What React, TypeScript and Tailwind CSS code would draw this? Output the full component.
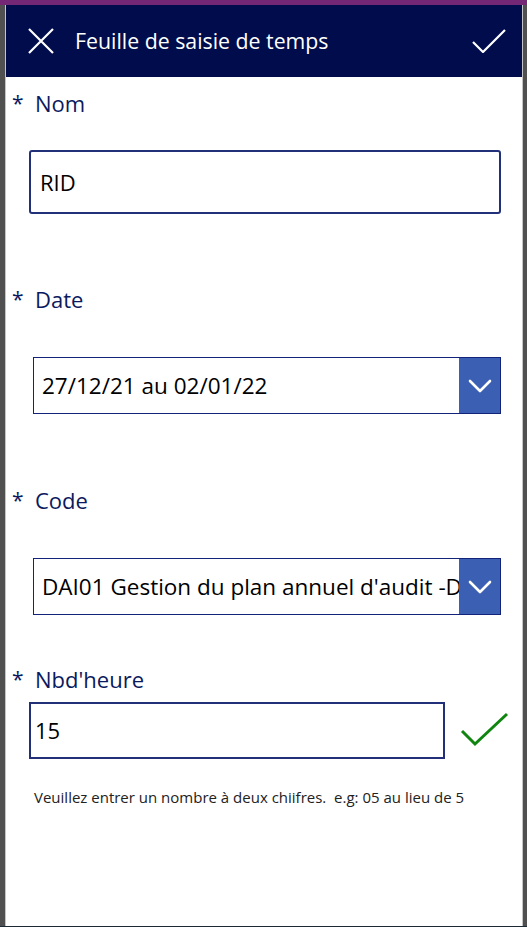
import React from "react";

const font = { fontFamily: '"Open Sans", "Noto Sans", sans-serif' };

function Label({ text, className }: { text: string; className: string }) {
  return (
    <div className={`flex h-[28px] items-center text-[#0b1a5e] ${className}`}>
      <span className="w-[29px] pl-[6px] text-[21px] leading-none">*</span>
      <span className="text-[22px] leading-none">{text}</span>
    </div>
  );
}

function Chevron() {
  return (
    <svg width="24" height="14" viewBox="0 0 24 14" fill="none">
      <path d="M2 2 L12 12 L22 2" stroke="white" strokeWidth="2.6" strokeLinecap="round" strokeLinejoin="round" />
    </svg>
  );
}

function Dropdown({ text, className }: { text: string; className: string }) {
  return (
    <div className={`ml-[27px] flex h-[57px] w-[468px] border border-[#14237a] bg-white ${className}`}>
      <div className="flex min-w-0 flex-1 items-center overflow-hidden whitespace-nowrap pl-[8px] text-[22.5px] text-black">
        {text}
      </div>
      <div className="flex w-[41px] items-center justify-center bg-[#3a5fb3]">
        <Chevron />
      </div>
    </div>
  );
}

export default function App() {
  return (
    <div className="flex h-[927px] w-[527px] flex-col bg-white" style={font}>
      <div className="h-[5px] w-full bg-[#742774]" />
      <div className="flex min-h-0 flex-1">
        <div className="w-[5px] bg-[#505050]" />
        <div className="w-[1px] bg-[#c4c4c4]" />
        <div className="flex flex-1 flex-col">
          <div className="flex h-[72px] items-center bg-[#000c4b] text-white">
            <svg className="ml-[22px]" width="26" height="26" viewBox="0 0 26 26" fill="none">
              <path d="M1 1 L25 25 M25 1 L1 25" stroke="white" strokeWidth="2.2" />
            </svg>
            <span className="ml-[21px] text-[21.3px] leading-none">Feuille de saisie de temps</span>
            <svg className="ml-auto mr-[16px]" width="34" height="24" viewBox="0 0 34 24" fill="none">
              <path d="M1 13 L11 23 L33 1" stroke="white" strokeWidth="2.2" />
            </svg>
          </div>

          <Label text="Nom" className="mt-[12px]" />
          <div className="ml-[23px] mt-[33px] flex h-[64px] w-[472px] items-center rounded-[3px] border-2 border-[#22307a] pl-[9px] text-[22px] text-black">
            RID
          </div>

          <Label text="Date" className="mt-[71px]" />
          <Dropdown text="27/12/21 au 02/01/22" className="mt-[44px]" />

          <Label text="Code" className="mt-[72px]" />
          <Dropdown text="DAI01 Gestion du plan annuel d'audit -DAI01" className="mt-[44px]" />

          <Label text="Nbd'heure" className="mt-[50px]" />
          <div className="mt-[9px] flex items-center">
            <div className="ml-[23px] flex h-[57px] w-[416px] items-center border-2 border-[#22307a] pl-[4px] text-[22px] text-black">
              15
            </div>
            <svg className="ml-[15px]" width="50" height="38" viewBox="0 0 50 38" fill="none">
              <path d="M2 19 L15 32 L47 2" stroke="#0f850f" strokeWidth="3" />
            </svg>
          </div>

          <div className="ml-[28px] mt-[28px] h-[20px] whitespace-nowrap text-[15px] leading-[20px] text-[#222]">
            Veuillez entrer un nombre à deux chiifres.&nbsp; e.g: 05 au lieu de 5
          </div>
        </div>
        <div className="w-[1px] bg-[#c4c4c4]" />
        <div className="w-[4px] bg-[#505050]" />
      </div>
      <div className="h-[1px] w-full bg-[#1c2833]" />
    </div>
  );
}
